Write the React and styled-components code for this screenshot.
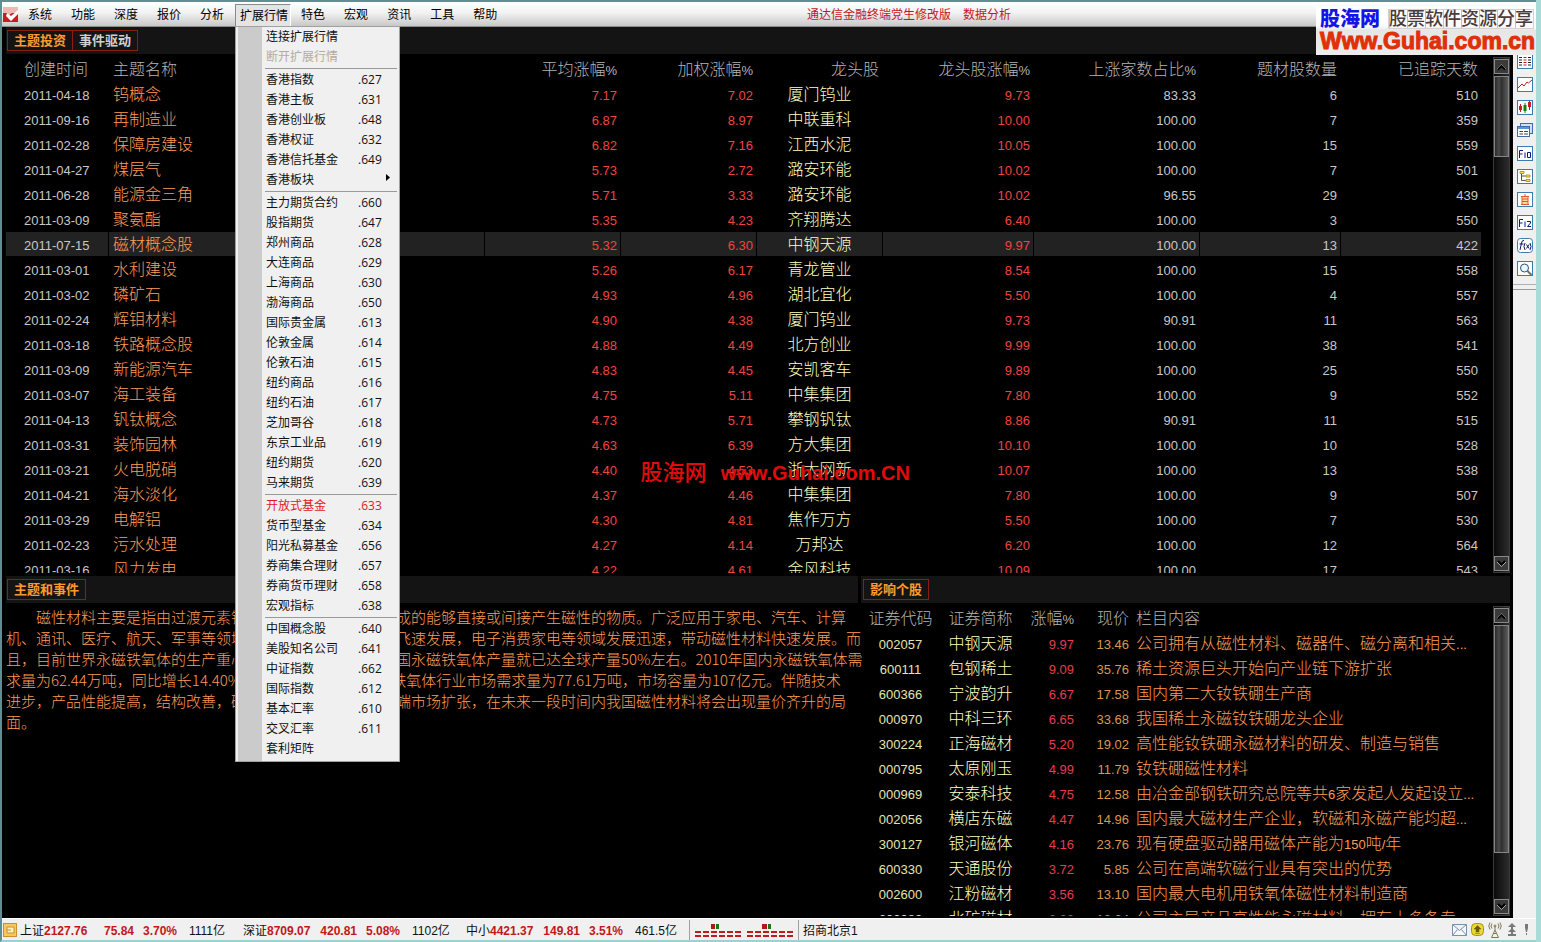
import React, { Fragment } from 'react'
import styled, { createGlobalStyle, css } from 'styled-components'

const GlobalStyle = createGlobalStyle`
  * {
    box-sizing: border-box;
  }

  body {
    background: #a9dcd8;
    font-family: "Liberation Sans", "Noto Sans CJK SC", sans-serif;
    font-size: 12px;
    margin: 0;
  }

  button {
    background: none;
    border: 0;
    color: inherit;
    font: inherit;
    margin: 0;
    padding: 0;
  }
`

const Window = styled.div`
  background: #f0f0f0;
  border: solid #5f8f90;
  border-width: 2px 0 2px 2px;
  border-bottom-color: #9fcfd0;
  display: flex;
  flex-direction: column;
  height: 100vh;
  margin-right: 5px;
  min-width: 1200px;
  position: relative;
`

/* menu bar */

const MenuBar = styled.nav`
  align-items: center;
  background: linear-gradient(#ffffff, #f2f2f2 45%, #c8c8c8);
  border-bottom: 1px solid #8c8c8c;
  color: #000;
  display: flex;
  flex: none;
  height: 25px;
  position: relative;
  z-index: 2;
`

const Logo = styled.svg`
  height: 15px;
  margin: 0 1px;
  width: 15px;
`

const MenuSlot = styled.div`
  height: 24px;
  padding: 2px 1px 0;
  position: relative;
`

const MenuButton = styled.button`
  height: 22px;
  line-height: 20px;
  padding: ${({ $open }) => ($open ? '0 2px 0 4px' : '0 9px 0 8px')};
  white-space: nowrap;

  ${({ $open }) => $open && css`
    background: #e4e4e4;
    border: 1px solid #8a8a8a;
    border-bottom: 0;
    border-right-color: #fff;
  `}
`

const Spacer = styled.div`
  flex: ${({ $grow }) => $grow};
`

const Title = styled.span`
  color: #c4161c;
  display: flex;
  gap: 12px;
  padding-bottom: 2px;
  white-space: nowrap;
`

const DropDown = styled.div`
  background: linear-gradient(to right, #f0f0f0 2px, #cbcbcb 2px, #cbcbcb 26px, #f0f0f0 26px);
  border: 1px solid #a0a0a0;
  font-family: "Open Sans", "Noto Sans CJK SC", sans-serif;
  left: 1px;
  padding-bottom: 2px;
  position: absolute;
  top: 24px;
  width: 165px;
`

const DropItem = styled.button`
  color: ${({ $tone }) => $tone || '#101010'};
  display: flex;
  height: 20px;
  line-height: 20px;
  padding: 0 8px 0 30px;
  text-align: left;
  width: 100%;
`

const DropLabel = styled.span`
  flex: none;
  width: 92px;
`

const DropArrow = styled.svg`
  height: 7px;
  margin: 4px 0 0 auto;
  width: 5px;
`

const DropLine = styled.hr`
  border: 0;
  border-top: 1px solid #9a9a9a;
  height: 2px;
  margin: 1px 2px 0 29px;
`

/* work area */

const Middle = styled.div`
  display: flex;
  flex: 1;
  min-height: 0;
`

const Workspace = styled.main`
  background: #000;
  display: grid;
  flex: 1;
  grid-template-rows: minmax(0, 549fr) minmax(0, 342fr);
  min-width: 0;
  position: relative;
`

const Panel = styled.section`
  display: flex;
  flex-direction: column;
  min-height: 0;
  min-width: 0;
`

const LowerPanels = styled.div`
  display: grid;
  grid-template-columns: minmax(0, 859fr) minmax(0, 652fr);
  min-height: 0;
`

const PanelBar = styled.header`
  background: #141414;
  flex: none;
  height: 27px;
  margin: 0 3px 0 ${({ $inset }) => $inset || '4px'};
  padding: ${({ $inset }) => ($inset ? '3px 2px' : '3px 1px')};
`

const Tabs = styled.div`
  border: 1px solid #8c1c14;
  display: inline-flex;
  font-weight: bold;
  height: 21px;
`

const Tab = styled.button`
  border-left: ${({ $divided }) => ($divided ? '1px solid #8c1c14' : '0')};
  color: ${({ $active }) => ($active ? '#ff9a2e' : '#d0d0d0')};
  font-size: 13px;
  line-height: 19px;
  padding: 0 6px;
`

const PanelBody = styled.div`
  display: flex;
  flex: 1;
  margin-bottom: ${({ $bottom }) => $bottom || '2px'};
  min-height: 0;
  padding: 3px 3px 0 ${({ $left }) => $left || '4px'};
`

const TableClip = styled.div`
  flex: 1;
  margin-right: 11px;
  min-width: 0;
  overflow: hidden;
`

const Table = styled.table`
  border-collapse: separate;
  border-spacing: 0;
  font-size: 16px;
  font-weight: 300;
  table-layout: fixed;
  width: 100%;
`

const Row = styled.tr`
  background: ${({ $selected }) => ($selected ? '#222222' : 'transparent')};
  height: 25px;
`

const cell = css`
  border-bottom: 1px solid #000;
  border-right: 1px solid #000;
  height: 25px;
  line-height: 23px;
  overflow: hidden;
  padding: 0 ${({ $pad }) => $pad || '3px'};
  text-align: ${({ $align }) => $align || 'left'};
  white-space: nowrap;
`

const HeadCell = styled.th`
  ${cell}
  color: #b4b4b4;
  font-weight: 300;
`

const Cell = styled.td`
  ${cell}
  color: ${({ $color }) => $color || '#c8c8c8'};
`

const Digits = styled.span`
  font-size: 13px;
  font-weight: 400;
  line-height: 1;
`

const Summary = styled.p`
  color: #ff9c58;
  font-family: "Noto Sans CJK SC", sans-serif;
  font-size: 15px;
  font-weight: 300;
  line-height: 21px;
  margin: 0;
  white-space: pre;

  span {
    display: block;
  }

  span:first-child {
    text-indent: 30px;
  }
`

/* scroll bars */

const Track = styled.div`
  background: linear-gradient(to right, #0a0a0a, #2c2c2c);
  border: 1px solid #3c3c3c;
  display: flex;
  flex: none;
  flex-direction: column;
  padding: 1px 0;
  width: 17px;
`

const TrackButton = styled.button`
  background: #3a3a3a;
  border: 1px solid #8a8a8a;
  display: flex;
  flex: none;
  height: 15px;
`

const TrackRun = styled.div`
  flex: 1;
  padding: 2px 0;
`

const Thumb = styled.div`
  background: linear-gradient(to right, #2a2a2a, #4a4a4a 30%, #303030 50%, #5c5c5c);
  border: 1px solid #858585;
`

/* tool strip on the right */

const ToolStrip = styled.aside`
  align-items: center;
  background: #f0f0f0;
  display: flex;
  flex: none;
  flex-direction: column;
  padding-top: 27px;
  width: 23px;
`

const ToolButton = styled.button`
  height: 16px;
  margin-bottom: 7px;
  width: 16px;

  svg {
    display: block;
  }
`

const ToolLine = styled.hr`
  border: 0;
  border-bottom: 1px solid #9a9a9a;
  border-top: 1px solid #b0b0b0;
  height: 6px;
  margin: 0;
  width: 100%;
`

/* status bar */

const StatusBar = styled.footer`
  align-items: center;
  border-top: 1px solid #fff;
  color: #101010;
  display: flex;
  flex: none;
  height: 22px;
  padding: 0 6px 0 1px;
  white-space: nowrap;
`

const Index = styled.div`
  align-items: baseline;
  display: grid;
  grid-template-columns: 24px 46px 44px 43px auto;
  width: 223px;
`

const Quote = styled.b`
  color: #c01818;
  text-align: ${({ $right }) => ($right ? 'right' : 'left')};
`

const Volume = styled.span`
  padding-left: 12px;
`

const StatusCell = styled.div`
  align-items: center;
  border-left: 1px solid #a0a0a0;
  display: flex;
  height: 20px;
  padding: 0 ${({ $pad }) => $pad};
`

const Tray = styled.div`
  align-items: center;
  display: flex;
  gap: 4px;
  margin-left: auto;
`

/* watermarks, laid over the page */

const CornerMark = styled.div`
  background: linear-gradient(rgba(255, 255, 255, .95) 22px, #e6e6e6 24px, #ececec);
  height: 49px;
  padding: 3px 0 0 4px;
  position: absolute;
  right: 0;
  top: 4px;
  white-space: nowrap;
  width: 220px;
  z-index: 3;
`

const CornerTop = styled.div`
  align-items: center;
  display: flex;
  gap: 8px;
  line-height: 20px;
`

const CornerName = styled.b`
  color: #1414e6;
  font-size: 20px;
  font-weight: 900;
`

const CornerSlogan = styled.span`
  background: repeating-linear-gradient(to right, #c9bebe 0 1px, transparent 1px 18px);
  border: 1px solid #d8d0d0;
  color: #4a3c3c;
  font-size: 18px;
  font-weight: 500;
  line-height: 18px;
`

const CornerUrl = styled.div`
  -webkit-text-stroke: 1px #e03008;
  color: #e03008;
  font-size: 23px;
  font-weight: bold;
  line-height: 24px;
`

const CenterMark = styled.div`
  color: #e00c0c;
  display: flex;
  font-size: 20px;
  font-weight: bold;
  gap: 14px;
  left: 42%;
  line-height: 36px;
  padding-left: 4px;
  position: absolute;
  top: 48%;
  white-space: nowrap;
`

const CenterName = styled.span`
  font-size: 22px;
  font-weight: 500;
`

const RED = '#f04440'
const ORANGE = '#ff9c58'
const YELLOW = '#ffffc0'

const menus = ['系统', '功能', '深度', '报价', '分析', '扩展行情', '特色', '宏观', '资讯', '工具', '帮助']

const dropGroups = [
  [['连接扩展行情'], ['断开扩展行情', '', '#b4ac9c']],
  [
    ['香港指数', '.627'], ['香港主板', '.631'], ['香港创业板', '.648'],
    ['香港权证', '.632'], ['香港信托基金', '.649'], ['香港板块', 'sub'],
  ],
  [
    ['主力期货合约', '.660'], ['股指期货', '.647'], ['郑州商品', '.628'],
    ['大连商品', '.629'], ['上海商品', '.630'], ['渤海商品', '.650'],
    ['国际贵金属', '.613'], ['伦敦金属', '.614'], ['伦敦石油', '.615'],
    ['纽约商品', '.616'], ['纽约石油', '.617'], ['芝加哥谷', '.618'],
    ['东京工业品', '.619'], ['纽约期货', '.620'], ['马来期货', '.639'],
  ],
  [
    ['开放式基金', '.633', '#e01818'], ['货币型基金', '.634'], ['阳光私募基金', '.656'],
    ['券商集合理财', '.657'], ['券商货币理财', '.658'], ['宏观指标', '.638'],
  ],
  [
    ['中国概念股', '.640'], ['美股知名公司', '.641'], ['中证指数', '.662'],
    ['国际指数', '.612'], ['基本汇率', '.610'], ['交叉汇率', '.611'], ['套利矩阵'],
  ],
]

const themeColumns = [
  { title: '创建时间', width: 103, pad: '18px' },
  { title: '主题名称', pad: '4px', color: ORANGE },
  { title: '平均涨幅%', width: 136, align: 'right', color: RED },
  { title: '加权涨幅%', width: 136, align: 'right', color: RED },
  { title: '龙头股', width: 126, align: 'center', headAlign: 'right', color: YELLOW },
  { title: '龙头股涨幅%', width: 151, align: 'right', color: RED },
  { title: '上涨家数占比%', width: 166, align: 'right' },
  { title: '题材股数量', width: 141, align: 'right' },
  { title: '已追踪天数', width: 141, align: 'right' },
]

const themes = [
  ['2011-04-18', '钨概念', '7.17', '7.02', '厦门钨业', '9.73', '83.33', '6', '510'],
  ['2011-09-16', '再制造业', '6.87', '8.97', '中联重科', '10.00', '100.00', '7', '359'],
  ['2011-02-28', '保障房建设', '6.82', '7.16', '江西水泥', '10.05', '100.00', '15', '559'],
  ['2011-04-27', '煤层气', '5.73', '2.72', '潞安环能', '10.02', '100.00', '7', '501'],
  ['2011-06-28', '能源金三角', '5.71', '3.33', '潞安环能', '10.02', '96.55', '29', '439'],
  ['2011-03-09', '聚氨酯', '5.35', '4.23', '齐翔腾达', '6.40', '100.00', '3', '550'],
  ['2011-07-15', '磁材概念股', '5.32', '6.30', '中钢天源', '9.97', '100.00', '13', '422'],
  ['2011-03-01', '水利建设', '5.26', '6.17', '青龙管业', '8.54', '100.00', '15', '558'],
  ['2011-03-02', '磷矿石', '4.93', '4.96', '湖北宜化', '5.50', '100.00', '4', '557'],
  ['2011-02-24', '辉钼材料', '4.90', '4.38', '厦门钨业', '9.73', '90.91', '11', '563'],
  ['2011-03-18', '铁路概念股', '4.88', '4.49', '北方创业', '9.99', '100.00', '38', '541'],
  ['2011-03-09', '新能源汽车', '4.83', '4.45', '安凯客车', '9.89', '100.00', '25', '550'],
  ['2011-03-07', '海工装备', '4.75', '5.11', '中集集团', '7.80', '100.00', '9', '552'],
  ['2011-04-13', '钒钛概念', '4.73', '5.71', '攀钢钒钛', '8.86', '90.91', '11', '515'],
  ['2011-03-31', '装饰园林', '4.63', '6.39', '方大集团', '10.10', '100.00', '10', '528'],
  ['2011-03-21', '火电脱硝', '4.40', '4.53', '浙大网新', '10.07', '100.00', '13', '538'],
  ['2011-04-21', '海水淡化', '4.37', '4.46', '中集集团', '7.80', '100.00', '9', '507'],
  ['2011-03-29', '电解铝', '4.30', '4.81', '焦作万方', '5.50', '100.00', '7', '530'],
  ['2011-02-23', '污水处理', '4.27', '4.14', '万邦达', '6.20', '100.00', '12', '564'],
  ['2011-03-16', '风力发电', '4.22', '4.61', '金风科技', '10.09', '100.00', '17', '543'],
]

const stockColumns = [
  { title: '证券代码', width: 80, align: 'center', color: '#e4e4b0' },
  { title: '证券简称', width: 80, align: 'center', color: YELLOW },
  { title: '涨幅%', width: 57, align: 'right', color: '#e83c50' },
  { title: '现价', width: 55, align: 'right', color: '#d89850' },
  { title: '栏目内容', color: ORANGE },
]

const stocks = [
  ['002057', '中钢天源', '9.97', '13.46', '公司拥有从磁性材料、磁器件、磁分离和相关...'],
  ['600111', '包钢稀土', '9.09', '35.76', '稀土资源巨头开始向产业链下游扩张'],
  ['600366', '宁波韵升', '6.67', '17.58', '国内第二大钕铁硼生产商'],
  ['000970', '中科三环', '6.65', '33.68', '我国稀土永磁钕铁硼龙头企业'],
  ['300224', '正海磁材', '5.20', '19.02', '高性能钕铁硼永磁材料的研发、制造与销售'],
  ['000795', '太原刚玉', '4.99', '11.79', '钕铁硼磁性材料'],
  ['000969', '安泰科技', '4.75', '12.58', '由冶金部钢铁研究总院等共6家发起人发起设立...'],
  ['002056', '横店东磁', '4.47', '14.96', '国内最大磁材生产企业，软磁和永磁产能均超...'],
  ['300127', '银河磁体', '4.16', '23.76', '现有硬盘驱动器用磁体产能为150吨/年'],
  ['600330', '天通股份', '3.72', '5.85', '公司在高端软磁行业具有突出的优势'],
  ['002600', '江粉磁材', '3.56', '13.10', '国内最大电机用铁氧体磁性材料制造商'],
  ['600980', '北矿磁材', '3.33', '18.04', '公司主导产品高性能永磁材料，拥有十多条专'],
]

const summary = [
  '磁性材料主要是指由过渡元素铁、钴、镍及其合金等组成的能够直接或间接产生磁性的物质。广泛应用于家电、汽车、计算',
  '机、通讯、医疗、航天、军事等领域。随着我国工业和科技飞速发展，电子消费家电等领域发展迅速，带动磁性材料快速发展。而',
  '且，目前世界永磁铁氧体的生产重心已转移至中国，目前我国永磁铁氧体产量就已达全球产量50%左右。2010年国内永磁铁氧体需',
  '求量为62.44万吨，同比增长14.40%。预计到十二五末永磁铁氧体行业市场需求量为77.61万吨，市场容量为107亿元。伴随技术',
  '进步，产品性能提高，结构改善，磁性材料的应用不断向高端市场扩张，在未来一段时间内我国磁性材料将会出现量价齐升的局',
  '面。',
]

const indexes = [
  ['上证', '2127.76', '75.84', '3.70%', '1111亿'],
  ['深证', '8709.07', '420.81', '5.08%', '1102亿'],
  ['中小', '4421.37', '149.81', '3.51%', '461.5亿'],
]

// digits run smaller than the Chinese text beside them
const Mixed = ({ text }) =>
  text.split(/([\d.%/-]+)/).map((part, i) =>
    i % 2 ? <Digits key={i}>{part}</Digits> : part)

const DataTable = ({ label, columns, rows, selected }) => (
  <Table aria-label={label}>
    <colgroup>
      {columns.map(({ title, width }) => (
        <col key={title} width={width} />
      ))}
    </colgroup>
    <thead>
      <Row>
        {columns.map(({ title, align, headAlign, pad }) => (
          <HeadCell key={title} $align={headAlign || align} $pad={pad}>
            <Mixed text={title} />
          </HeadCell>
        ))}
      </Row>
    </thead>
    <tbody>
      {rows.map((row, i) => (
        <Row key={i} $selected={i === selected}>
          {row.map((value, j) => (
            <Cell
              key={j}
              $align={columns[j].align}
              $color={columns[j].color}
              $pad={columns[j].pad}
            >
              <Mixed text={value} />
            </Cell>
          ))}
        </Row>
      ))}
    </tbody>
  </Table>
)

const ScrollBar = ({ size }) => (
  <Track>
    <TrackButton aria-label="向上">
      <svg width="13" height="13" fill="none" stroke="#000" strokeWidth="2">
        <path d="M2 9l4.500-4.500L11 9" stroke="#bbb" strokeWidth="1" />
        <path d="M3 9.500L6.500 6 10 9.500" />
      </svg>
    </TrackButton>
    <TrackRun>
      <Thumb style={{ height: `${size}%` }} />
    </TrackRun>
    <TrackButton aria-label="向下">
      <svg width="13" height="13" fill="none" stroke="#000" strokeWidth="2">
        <path d="M2 5l4.500 4.500L11 5" stroke="#bbb" strokeWidth="1" />
        <path d="M3 4L6.500 7.500 10 4" />
      </svg>
    </TrackButton>
  </Track>
)

const Frame = () => <rect x=".5" y=".5" width="15" height="14" fill="#fff" stroke="#3c7cac" />

const tools = [
  ['报价', (
    <Fragment>
      <Frame />
      <path d="M2 3.500h3M2 6h3M2 8.500h3M2 11h3" stroke="#222" />
      <path d="M6.500 3.500h3M6.500 6h3M6.500 8.500h3M6.500 11h3" stroke="#c02020" />
      <path d="M11 3.500h3M11 6h3M11 8.500h3M11 11h3" stroke="#222" />
    </Fragment>
  )],
  ['分时', <Fragment><Frame /><path d="M1 11l4-4 2 2 3-4 1.500 1L15 3" stroke="#c02020" fill="none" /></Fragment>],
  ['K线', (
    <Fragment>
      <Frame />
      <path d="M3.500 4v8M12.500 1v9" stroke="#c02020" />
      <path d="M2 6h3v4H2zM11 2h3v5h-3z" fill="#c82020" />
      <path d="M8 3v10" stroke="#108010" />
      <path d="M6.500 5h3v6h-3z" fill="#108010" />
    </Fragment>
  )],
  ['多窗口', (
    <Fragment>
      <rect x="3.500" y=".5" width="12" height="10" fill="#cfe0f4" stroke="#3c6cac" />
      <rect x=".5" y="3.500" width="12" height="10" fill="#fff" stroke="#3c6cac" />
      <path d="M1 5h11" stroke="#5c94dc" strokeWidth="2" />
      <path d="M2.500 8.500h3.500M7 8.500h4M2.500 11h3.500M7 11h4" stroke="#444" />
    </Fragment>
  )],
  ['F10', (
    <Fragment>
      <Frame />
      <path d="M2.500 12V4.500H6M2.500 8H5.500M8 6.500V12M10.500 6.500h3V11.500h-3z" stroke="#101880" fill="none" />
    </Fragment>
  )],
  ['板块树', (
    <Fragment>
      <Frame />
      <path d="M4.500 4v7.500H9M4.500 7H9" stroke="#555" fill="none" />
      <path d="M3 2.500h4v2H3zM9 6h4v2H9zM9 10.500h4v2H9z" fill="#f8e070" stroke="#c09820" />
    </Fragment>
  )],
  ['自选', (
    <Fragment>
      <Frame />
      <path d="M8 2v2M4 4.500h8M5 4.500v8h6v-8M5 7h6M5 9.500h6M4 12.500h8" stroke="#e05830" fill="#fbd8a0" />
    </Fragment>
  )],
  ['F12', (
    <Fragment>
      <Frame />
      <path d="M2.500 12V4.500H6M2.500 8H5.500M8 6.500V12M10 6.500h3.500V8L10.500 11.500H14" stroke="#101880" fill="none" />
    </Fragment>
  )],
  ['公式', (
    <Fragment>
      <rect x=".5" y=".5" width="15" height="14" rx="3" fill="#fff" stroke="#3c7cac" />
      <path d="M7 2.500Q5 2 4.500 5L3 12M2.500 6h4M8 5Q6 8.500 8 12M9.500 6.500l2.500 4M12 6.500l-2.500 4M13 5q2 3.500 0 7" stroke="#101860" fill="none" />
    </Fragment>
  )],
  ['查找', (
    <Fragment>
      <Frame />
      <circle cx="7.500" cy="7" r="4" fill="#e8f8fc" stroke="#305070" />
      <path d="M10.500 10l4 4" stroke="#707070" strokeWidth="2" />
    </Fragment>
  )],
]

const App = () => (
  <Fragment>
    <GlobalStyle />
    <Window>
      <MenuBar>
        <Logo viewBox="0 0 15 15">
          <rect width="15" height="15" fill="#c81c24" />
          <path d="M0 0h15v6H9L6 8 4 6H0z" fill="#f0b8b4" />
          <path d="M4 6l4 3 7-6v4L8 14 3 9z" fill="#fff" />
        </Logo>
        {menus.map((name) => {
          const open = name === '扩展行情'
          return (
            <MenuSlot key={name}>
              <MenuButton $open={open} aria-expanded={open}>{name}</MenuButton>
              {open && (
                <DropDown>
                  {dropGroups.map((group, i) => (
                    <Fragment key={i}>
                      {i > 0 && <DropLine />}
                      {group.map(([label, code, tone]) => (
                        <DropItem key={label} $tone={tone}>
                          <DropLabel>{label}</DropLabel>
                          {code === 'sub'
                            ? <DropArrow viewBox="0 0 5 7"><path d="M0 0l4 3.500L0 7z" /></DropArrow>
                            : code}
                        </DropItem>
                      ))}
                    </Fragment>
                  ))}
                </DropDown>
              )}
            </MenuSlot>
          )
        })}
        <Spacer $grow={4} />
        <Title>
          <span>通达信金融终端党生修改版</span>
          <span>数据分析</span>
        </Title>
        <Spacer $grow={7} />
      </MenuBar>

      <Middle>
        <Workspace>
          <Panel>
            <PanelBar>
              <Tabs>
                <Tab $active>主题投资</Tab>
                <Tab $divided>事件驱动</Tab>
              </Tabs>
            </PanelBar>
            <PanelBody $bottom="3px">
              <TableClip>
                <DataTable label="主题投资" columns={themeColumns} rows={themes} selected={6} />
              </TableClip>
              <ScrollBar size={17} />
            </PanelBody>
          </Panel>
          <LowerPanels>
            <Panel>
              <PanelBar>
                <Tabs><Tab $active>主题和事件</Tab></Tabs>
              </PanelBar>
              <PanelBody>
                <Summary>
                  {summary.map((line) => <span key={line}>{line}</span>)}
                </Summary>
              </PanelBody>
            </Panel>
            <Panel>
              <PanelBar $inset="0">
                <Tabs><Tab $active>影响个股</Tab></Tabs>
              </PanelBar>
              <PanelBody $left="0">
                <TableClip>
                  <DataTable label="影响个股" columns={stockColumns} rows={stocks} />
                </TableClip>
                <ScrollBar size={84} />
              </PanelBody>
            </Panel>
          </LowerPanels>
          <CenterMark>
            <CenterName>股海网</CenterName>
            <span>www.Guhai.com.CN</span>
          </CenterMark>
        </Workspace>
        <ToolStrip>
          {tools.map(([name, drawing]) => (
            <ToolButton key={name} aria-label={name}>
              <svg width="16" height="16">{drawing}</svg>
            </ToolButton>
          ))}
          <ToolLine />
        </ToolStrip>
      </Middle>

      <StatusBar>
        <svg width="17" height="14">
          <rect x=".5" y=".5" width="13" height="13" fill="#f4c860" stroke="#c89030" />
          <path d="M4 4h7v6H4zM4 7h4" fill="#fff4c0" stroke="#c89030" />
        </svg>
        {indexes.map(([name, price, change, percent, volume]) => (
          <Index key={name}>
            <span>{name}</span>
            <Quote>{price}</Quote>
            <Quote $right>{change}</Quote>
            <Quote $right>{percent}</Quote>
            <Volume>{volume}</Volume>
          </Index>
        ))}
        <StatusCell $pad="5px">
          <svg width="98" height="16">
            <path d="M0 10h46M52 10h46M0 14h46M52 14h46" stroke="#c01c1c" strokeWidth="2" strokeDasharray="6 2" />
            <path d="M16 2h4v5h-4zM67 2h5v5h-5z" fill="#b01818" />
            <path d="M21 2h3v5h-3zM73 2h3v5h-3z" fill="#187818" />
          </svg>
        </StatusCell>
        <StatusCell $pad="4px">招商北京1</StatusCell>
        <Tray>
          <svg width="15" height="12" fill="#f4f8fc" stroke="#7890a8">
            <path d="M.5.5h14v11H.5zM.5.5l7 6 7-6M.5 11.500l5-6M14.500 11.500l-5-6" />
          </svg>
          <svg width="13" height="13">
            <rect x=".5" y=".5" width="12" height="12" rx="4" fill="#e8d838" stroke="#a89410" />
            <path d="M6.500 2.500L10 6H8v3H5V6H3zM4 10.500h5" fill="#6c5c08" stroke="#6c5c08" strokeWidth=".5" />
          </svg>
          <svg width="14" height="16" fill="none" stroke="#807850">
            <path d="M4 1.500q-2 2.500 0 5M2 .5q-2.500 3.500 0 7M10 1.500q2 2.500 0 5M12 .5q2.500 3.500 0 7M7 4v4M7 8l-3.500 7.500h7zM5.500 11.500h3" />
            <circle cx="7" cy="4" r="1" />
          </svg>
          <svg width="12" height="14" fill="#787878">
            <path d="M6 0l4 4H7v2l3 3H7v2h3v2H2v-2h3V9H2l3-3V4H2z" />
          </svg>
          <svg width="8" height="14" fill="#787878">
            <path d="M3 1h3v4l-1 4H4L3 5zM4 10h1v2H4z" />
          </svg>
        </Tray>
      </StatusBar>

      <CornerMark>
        <CornerTop>
          <CornerName>股海网</CornerName>
          <CornerSlogan>股票软件资源分享</CornerSlogan>
        </CornerTop>
        <CornerUrl>Www.Guhai.com.cn</CornerUrl>
      </CornerMark>
    </Window>
  </Fragment>
)

export default App
